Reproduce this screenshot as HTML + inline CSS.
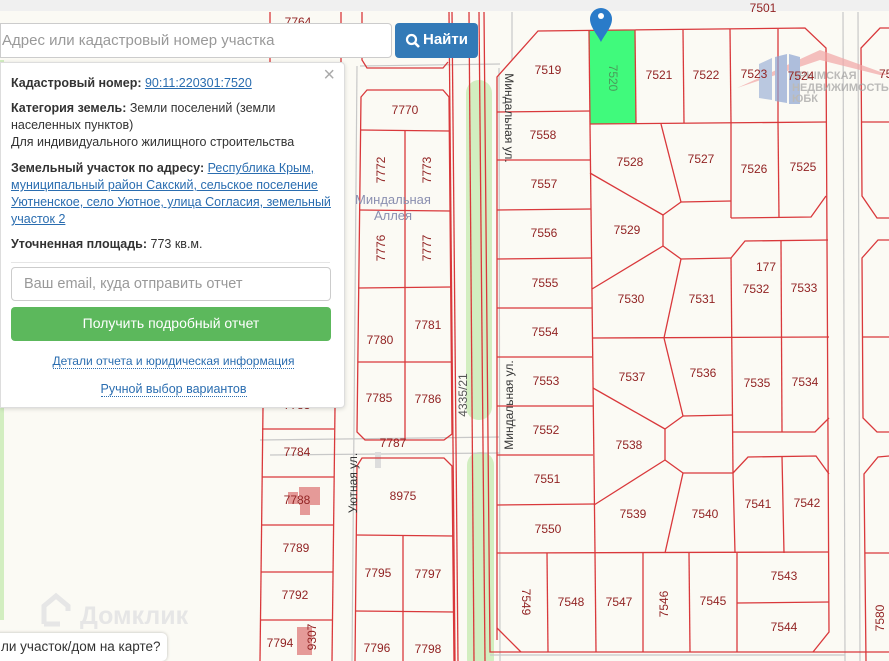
<!DOCTYPE html>
<html><head><meta charset="utf-8"><style>
*{margin:0;padding:0;box-sizing:border-box}
body{width:889px;height:661px;overflow:hidden;background:#fbfaf4;font-family:"Liberation Sans",sans-serif;position:relative}
svg{position:absolute;left:0;top:0}
.t{font-family:"Liberation Sans",sans-serif;font-size:12px;fill:#922424;text-anchor:middle;dominant-baseline:middle}
#search{position:absolute;left:0;top:23px;width:392px;height:35px;background:#fff;border:1px solid #ccc;border-radius:0 4px 4px 0;font-size:15px;color:#999;padding:8px 0 0 1px}
#btn{position:absolute;left:395px;top:23px;width:83px;height:35px;background:#337ab7;border-radius:4px;color:#fff;font-size:15px;font-weight:bold;padding:8px 0 0 28px}
#panel{position:absolute;left:0;top:62px;width:345px;height:346px;background:#fff;border:1px solid #ddd;border-radius:0 4px 4px 0;box-shadow:0 1px 4px rgba(0,0,0,.15);font-size:12.5px;color:#333;line-height:17px;padding:10px 10px}
#panel b{color:#333}
#panel a{color:#2a6db0;text-decoration:underline}
.x{position:absolute;right:9px;top:4px;font-size:20px;color:#aaa}
#email{position:absolute;left:10px;top:204px;width:320px;height:34px;border:1px solid #ccc;border-radius:4px;font-size:14.5px;color:#999;padding:8px 0 0 12px}
#green{position:absolute;left:10px;top:244px;width:320px;height:34px;background:#5cb85c;border-radius:4px;color:#fff;font-size:14px;text-align:center;padding-top:8px}
.lk{position:absolute;left:0;width:345px;text-align:center;font-size:12px;color:#2a6db0}
.lk span{border-bottom:1px dotted #2a6db0}
#tip{position:absolute;left:-10px;top:633px;width:177px;height:28px;background:#fff;border-radius:5px;box-shadow:0 0 3px rgba(0,0,0,.25);font-size:13.5px;color:#333;padding:6px 0 0 11px;white-space:nowrap;overflow:hidden}
</style></head><body>
<svg width="889" height="661" viewBox="0 0 889 661">
<rect x="0" y="0" width="889" height="11" fill="#f0f0f0"/>
<rect x="466" y="80" width="26" height="340" rx="13" fill="#d2eec0"/>
<rect x="467" y="452" width="27" height="220" rx="13" fill="#d2eec0"/>
<rect x="0" y="60" width="4" height="560" fill="#d2eec0"/>
<g stroke="#c8c8c8" stroke-width="1.2" fill="none">
<line x1="357" y1="66" x2="352" y2="661"/><line x1="499" y1="68" x2="500" y2="661"/><line x1="512" y1="12" x2="512" y2="60"/>
<line x1="843" y1="12" x2="845" y2="661"/><line x1="858" y1="12" x2="860" y2="661"/>
<line x1="360" y1="66" x2="500" y2="64"/><line x1="270" y1="455" x2="500" y2="453"/><line x1="260" y1="440" x2="500" y2="437"/>
<line x1="490" y1="655" x2="845" y2="655"/>
</g>
<rect x="375" y="452" width="6" height="16" fill="#ddd"/>
<polygon points="589,31 635,30 636,123 590,124" fill="#40fa7c"/>
<g stroke="#d9383b" stroke-width="1.3" fill="none">
<line x1="449" y1="12" x2="455" y2="661"/><line x1="452" y1="12" x2="458" y2="661"/>
<line x1="469" y1="12" x2="474" y2="661"/><line x1="479" y1="12" x2="485" y2="661"/>
<polyline points="484,12 490,652 889,652"/>
<line x1="270" y1="12" x2="270" y2="62"/><line x1="341" y1="12" x2="341" y2="62"/>
<polyline points="362,12 362,60 367,68 443,68 448,62"/>
<polygon points="361,97 367,90 443,90 449,97 452,434 444,440 365,440 357,432"/>
<line x1="361" y1="130" x2="449" y2="131"/>
<line x1="405" y1="131" x2="405" y2="440"/>
<line x1="359" y1="210" x2="450" y2="211"/>
<line x1="358" y1="288" x2="451" y2="287"/>
<line x1="358" y1="362" x2="451" y2="362"/>
<polyline points="355,661 357,466 362,458 444,458 452,466 454,661"/>
<line x1="356" y1="535" x2="453" y2="536"/>
<line x1="403" y1="536" x2="403" y2="661"/>
<line x1="355" y1="611" x2="454" y2="612"/>
<line x1="263" y1="408" x2="260" y2="661"/><line x1="335" y1="408" x2="332" y2="661"/>
<line x1="262" y1="429" x2="334" y2="429"/><line x1="262" y1="477" x2="334" y2="477"/>
<line x1="261" y1="525" x2="333" y2="525"/><line x1="261" y1="572" x2="333" y2="572"/>
<line x1="260" y1="620" x2="333" y2="620"/>
<polyline points="497,640 497,77 538,31 805,28 826,48 829,632 813,652"/>
<line x1="497" y1="628" x2="521" y2="652"/>
<line x1="589" y1="31" x2="590" y2="124"/><line x1="635" y1="30" x2="636" y2="123"/>
<line x1="683" y1="30" x2="684" y2="123"/><line x1="730" y1="29" x2="731" y2="122"/>
<line x1="778" y1="29" x2="778" y2="122"/>
<line x1="497" y1="112" x2="590" y2="111"/>
<line x1="590" y1="124" x2="826" y2="122"/>
<line x1="497" y1="160" x2="590" y2="160"/><line x1="497" y1="210" x2="591" y2="209"/>
<line x1="497" y1="259" x2="591" y2="258"/><line x1="497" y1="308" x2="592" y2="308"/>
<line x1="497" y1="357" x2="592" y2="357"/><line x1="497" y1="406" x2="593" y2="406"/>
<line x1="497" y1="455" x2="593" y2="455"/><line x1="497" y1="505" x2="594" y2="504"/>
<line x1="590" y1="124" x2="595" y2="553"/>
<line x1="661" y1="124" x2="681" y2="202"/><line x1="681" y1="202" x2="731" y2="201"/>
<line x1="731" y1="122" x2="731" y2="218"/><line x1="778" y1="122" x2="779" y2="218"/>
<polyline points="731,218 811,217 826,196"/>
<line x1="590" y1="173" x2="663" y2="215"/><line x1="663" y1="215" x2="681" y2="202"/>
<line x1="663" y1="215" x2="663" y2="246"/><line x1="663" y1="246" x2="592" y2="289"/>
<line x1="663" y1="246" x2="681" y2="259"/><line x1="681" y1="259" x2="731" y2="258"/>
<polyline points="731,258 745,241 828,240"/>
<line x1="731" y1="258" x2="733" y2="473"/><line x1="781" y1="241" x2="782" y2="432"/>
<line x1="681" y1="259" x2="664" y2="338"/>
<line x1="592" y1="338" x2="829" y2="337"/>
<line x1="664" y1="338" x2="683" y2="416"/><line x1="683" y1="416" x2="733" y2="415"/>
<polyline points="733,432 815,432 829,418"/>
<line x1="593" y1="388" x2="665" y2="429"/><line x1="665" y1="429" x2="683" y2="416"/>
<line x1="665" y1="429" x2="665" y2="460"/><line x1="665" y1="460" x2="594" y2="505"/>
<line x1="665" y1="460" x2="683" y2="473"/><line x1="683" y1="473" x2="733" y2="473"/>
<polyline points="733,473 748,457 816,456 829,474"/>
<line x1="733" y1="473" x2="735" y2="553"/><line x1="782" y1="456" x2="784" y2="553"/>
<line x1="683" y1="473" x2="665" y2="553"/>
<line x1="497" y1="553" x2="829" y2="552"/>
<line x1="547" y1="553" x2="548" y2="652"/><line x1="595" y1="553" x2="596" y2="652"/>
<line x1="643" y1="553" x2="643" y2="652"/><line x1="689" y1="553" x2="690" y2="652"/>
<line x1="737" y1="553" x2="737" y2="652"/><line x1="737" y1="603" x2="829" y2="602"/>
<polyline points="889,28 880,28 861,48 862,196 877,218 889,218"/>
<line x1="862" y1="122" x2="889" y2="122"/>
<polyline points="889,240 878,240 862,258 863,418 877,432 889,432"/>
<line x1="862" y1="337" x2="889" y2="337"/>
<polyline points="889,456 878,457 864,474 866,661"/>
<line x1="865" y1="553" x2="889" y2="553"/>
</g>
<g fill="#e59a98">
<rect x="299" y="487" width="21" height="18"/><rect x="300" y="505" width="10" height="10"/><rect x="288" y="492" width="10" height="12"/>
<rect x="297" y="627" width="15" height="28"/>
</g>
<g opacity="0.7">
<polygon points="737,88 820,50 889,75 880,75 820,60" fill="#f2a7a7"/>
<polygon points="759,64 772,58 772,100 759,98" fill="#9fb3d8"/>
<polygon points="775,57 787,54 787,103 775,101" fill="#8ea6d2"/>
<polygon points="789,54 800,57 800,104 789,104" fill="#8ea6d2"/>
<text x="792" y="79" font-family="Liberation Sans" font-weight="bold" font-size="11" fill="#a0a0a0">КРЫМСКАЯ</text>
<text x="792" y="91" font-family="Liberation Sans" font-weight="bold" font-size="11" fill="#a0a0a0">НЕДВИЖИМОСТЬ</text>
<text x="792" y="102" font-family="Liberation Sans" font-weight="bold" font-size="11" fill="#a0a0a0">ЮБК</text>
</g>
<g class="t">
<text class="t" x="298" y="23">7764</text><text class="t" x="763" y="9">7501</text>
<text class="t" x="548" y="71">7519</text>
<text class="t" x="612" y="78" transform="rotate(90 612 78)" style="fill:#4a9a5a">7520</text>
<text class="t" x="659" y="76">7521</text><text class="t" x="706" y="76">7522</text>
<text class="t" x="754" y="75">7523</text><text class="t" x="801" y="77">7524</text><text class="t" x="889" y="75">755</text>
<text class="t" x="543" y="136">7558</text><text class="t" x="630" y="163">7528</text>
<text class="t" x="701" y="160">7527</text><text class="t" x="754" y="170">7526</text><text class="t" x="803" y="168">7525</text>
<text class="t" x="544" y="185">7557</text><text class="t" x="627" y="231">7529</text>
<text class="t" x="544" y="234">7556</text><text class="t" x="545" y="284">7555</text>
<text class="t" x="766" y="268">177</text><text class="t" x="756" y="290">7532</text><text class="t" x="804" y="289">7533</text>
<text class="t" x="631" y="300">7530</text><text class="t" x="702" y="300">7531</text>
<text class="t" x="545" y="333">7554</text><text class="t" x="632" y="378">7537</text>
<text class="t" x="703" y="374">7536</text><text class="t" x="757" y="384">7535</text><text class="t" x="805" y="383">7534</text>
<text class="t" x="546" y="382">7553</text><text class="t" x="546" y="431">7552</text>
<text class="t" x="629" y="446">7538</text><text class="t" x="547" y="480">7551</text>
<text class="t" x="758" y="505">7541</text><text class="t" x="807" y="504">7542</text>
<text class="t" x="633" y="515">7539</text><text class="t" x="705" y="515">7540</text>
<text class="t" x="548" y="530">7550</text><text class="t" x="784" y="577">7543</text>
<text class="t" x="525" y="602" transform="rotate(90 525 602)">7549</text>
<text class="t" x="571" y="603">7548</text><text class="t" x="619" y="603">7547</text>
<text class="t" x="665" y="604" transform="rotate(-90 665 604)">7546</text>
<text class="t" x="713" y="602">7545</text><text class="t" x="784" y="628">7544</text>
<text class="t" x="881" y="618" transform="rotate(-90 881 618)">7580</text>
<text class="t" x="405" y="111">7770</text>
<text class="t" x="382" y="170" transform="rotate(-90 382 170)">7772</text>
<text class="t" x="428" y="170" transform="rotate(-90 428 170)">7773</text>
<text class="t" x="382" y="248" transform="rotate(-90 382 248)">7776</text>
<text class="t" x="428" y="248" transform="rotate(-90 428 248)">7777</text>
<text class="t" x="380" y="341">7780</text><text class="t" x="428" y="326">7781</text>
<text class="t" x="379" y="399">7785</text><text class="t" x="428" y="400">7786</text>
<text class="t" x="297" y="406">7783</text>
<text class="t" x="297" y="453">7784</text><text class="t" x="393" y="444">7787</text>
<text class="t" x="297" y="501">7788</text><text class="t" x="403" y="497">8975</text>
<text class="t" x="296" y="549">7789</text><text class="t" x="378" y="574">7795</text><text class="t" x="428" y="575">7797</text>
<text class="t" x="295" y="596">7792</text><text class="t" x="280" y="644">7794</text>
<text class="t" x="313" y="637" transform="rotate(-90 313 637)">9307</text>
<text class="t" x="377" y="649">7796</text><text class="t" x="428" y="650">7798</text>
<text class="t" x="464" y="395" transform="rotate(-90 464 395)" style="fill:#555">4335/21</text>
</g>
<g font-family="Liberation Sans" font-size="12" fill="#333" text-anchor="middle" dominant-baseline="middle">
<text x="508" y="118" transform="rotate(90 508 118)">Миндальная ул.</text>
<text x="510" y="405" transform="rotate(-90 510 405)">Миндальная ул.</text>
<text x="354" y="483" transform="rotate(-90 354 483)">Уютная ул.</text>
</g>
<text x="393" y="204" font-family="Liberation Sans" font-size="13" fill="#8a8fb0" text-anchor="middle">Миндальная</text>
<text x="393" y="220" font-family="Liberation Sans" font-size="13" fill="#8a8fb0" text-anchor="middle">Аллея</text>
<path d="M601,42 C597,34 590,27 590,19 A11,11 0 0 1 612,19 C612,27 605,34 601,42Z" fill="#2a7bc9"/>
<circle cx="601" cy="16" r="3" fill="#fff"/>
<g>
<path d="M44,624 L44,606 L56,596 L68,606 L68,611 M60,624 L44,624" fill="none" stroke="#e6e6e6" stroke-width="5"/>
<text x="80" y="624" font-family="Liberation Sans" font-weight="bold" font-size="25" fill="#e6e6e6">Домклик</text>
</g>
</svg>
<div id="search">Адрес или кадастровый номер участка</div>
<div id="btn"><svg width="16" height="16" style="left:10px;top:10px" viewBox="0 0 16 16"><circle cx="6.5" cy="6.5" r="4.5" stroke="#fff" stroke-width="2.2" fill="none"/><line x1="10" y1="10" x2="14" y2="14" stroke="#fff" stroke-width="2.6"/></svg>Найти</div>
<div id="panel">
<span class="x">×</span>
<div style="margin-top:2px"><b>Кадастровый номер:</b> <a>90:11:220301:7520</a></div>
<div style="margin-top:8px"><b>Категория земель:</b> Земли поселений (земли населенных пунктов)<br>Для индивидуального жилищного строительства</div>
<div style="margin-top:9px"><b>Земельный участок по адресу:</b> <a>Республика Крым, муниципальный район Сакский, сельское поселение Уютненское, село Уютное, улица Согласия, земельный участок 2</a></div>
<div style="margin-top:8px"><b>Уточненная площадь:</b> 773 кв.м.</div>
<div style="position:absolute;left:10px;right:14px;top:199px;border-top:1px solid #e5e5e5"></div>
<div id="email">Ваш email, куда отправить отчет</div>
<div id="green">Получить подробный отчет</div>
<div class="lk" style="top:290px"><span>Детали отчета и юридическая информация</span></div>
<div class="lk" style="top:318px;font-size:12.5px"><span>Ручной выбор вариантов</span></div>
</div>
<div id="tip">ли участок/дом на карте?</div>
</body></html>
